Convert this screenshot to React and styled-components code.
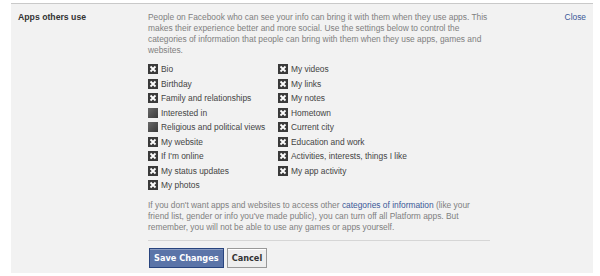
import styled, { createGlobalStyle } from "styled-components";

const Global = createGlobalStyle`
  html, body { margin: 0; padding: 0; background: #fff; }
  body { font-family: "Liberation Sans", Tahoma, Arial, sans-serif; }
`;

const Panel = styled.div`
  margin: 3px 7px 3px 11px;
  height: 270px;
  box-sizing: border-box;
  background: #f2f2f2;
  border-top: 1px solid #c9c9c9;
  display: grid;
  grid-template-columns: 130px 1fr 60px;
  align-items: start;
  padding: 8px 0 0 7px;
`;

const Title = styled.div`
  font-size: 8.7px;
  line-height: 11px;
  font-weight: bold;
  color: #333;
`;

const Body = styled.div`
  width: 342px;
`;

const Text = styled.p`
  margin: 0;
  font-size: 8.4px;
  line-height: 11px;
  color: #808080;
`;

const Link = styled.a`
  color: #3b5998;
  text-decoration: none;
`;

const CloseLink = styled(Link)`
  font-size: 8.4px;
  justify-self: end;
  margin-right: 7px;
  line-height: 11px;
`;

const Columns = styled.div`
  display: grid;
  grid-template-columns: 130px 1fr;
  margin: 6px 0 7px;
`;

const List = styled.ul`
  list-style: none;
  margin: 0;
  padding: 0;
`;

const Item = styled.li`
  display: flex;
  align-items: center;
  height: 14.5px;
  font-size: 8.4px;
  color: #444;
`;

const Box = styled.span`
  width: 10px;
  height: 10px;
  margin-right: 3px;
  flex: none;
  background: ${({ on }) => (on ? "#3a3a3a" : "linear-gradient(135deg, #6a6a6a, #3a3a3a)")};
  display: flex;
  align-items: center;
  justify-content: center;
`;

const Divider = styled.hr`
  border: 0;
  border-top: 1px solid #d6d6d6;
  margin: 7px 0 7px;
`;

const Buttons = styled.div`
  display: flex;
  gap: 3px;
  padding-left: 1px;
`;

const Button = styled.button`
  font-family: "DejaVu Sans", Tahoma, sans-serif;
  font-size: 8.2px;
  font-weight: bold;
  height: 20px;
  padding: 0 4px;
  border: 1px solid ${({ primary }) => (primary ? "#29447e" : "#999")};
  background: ${({ primary }) => (primary ? "#5b74a8" : "#eee")};
  color: ${({ primary }) => (primary ? "#fff" : "#333")};
  box-shadow: ${({ primary }) => (primary ? "inset 0 1px 0 #8a9cc2" : "inset 0 1px 0 #fff")};
`;

const Check = ({ on, children }) => (
  <Item>
    <Box on={on ? 1 : 0}>
      {on && (
        <svg width="8" height="8" viewBox="0 0 8 8">
          <path d="M1.5 1.5 L6.5 6.5 M6.5 1.5 L1.5 6.5" stroke="#fff" strokeWidth="1.8" />
        </svg>
      )}
    </Box>
    {children}
  </Item>
);

const left = [
  ["Bio", true],
  ["Birthday", true],
  ["Family and relationships", true],
  ["Interested in", false],
  ["Religious and political views", false],
  ["My website", true],
  ["If I'm online", true],
  ["My status updates", true],
  ["My photos", true],
];

const right = [
  "My videos",
  "My links",
  "My notes",
  "Hometown",
  "Current city",
  "Education and work",
  "Activities, interests, things I like",
  "My app activity",
];

export default function App() {
  return (
    <>
      <Global />
      <Panel>
        <Title>Apps others use</Title>
        <Body>
          <Text>
            People on Facebook who can see your info can bring it with them when they use apps. This
            makes their experience better and more social. Use the settings below to control the
            categories of information that people can bring with them when they use apps, games and
            websites.
          </Text>
          <Columns>
            <List>
              {left.map(([label, on]) => (
                <Check key={label} on={on}>{label}</Check>
              ))}
            </List>
            <List>
              {right.map((label) => (
                <Check key={label} on>{label}</Check>
              ))}
            </List>
          </Columns>
          <Text>
            If you don't want apps and websites to access other{" "}
            <Link href="#">categories of information</Link> (like your friend list, gender or info
            you've made public), you can turn off all Platform apps. But remember, you will not be
            able to use any games or apps yourself.
          </Text>
          <Divider />
          <Buttons>
            <Button primary={1}>Save Changes</Button>
            <Button>Cancel</Button>
          </Buttons>
        </Body>
        <CloseLink href="#">Close</CloseLink>
      </Panel>
    </>
  );
}
